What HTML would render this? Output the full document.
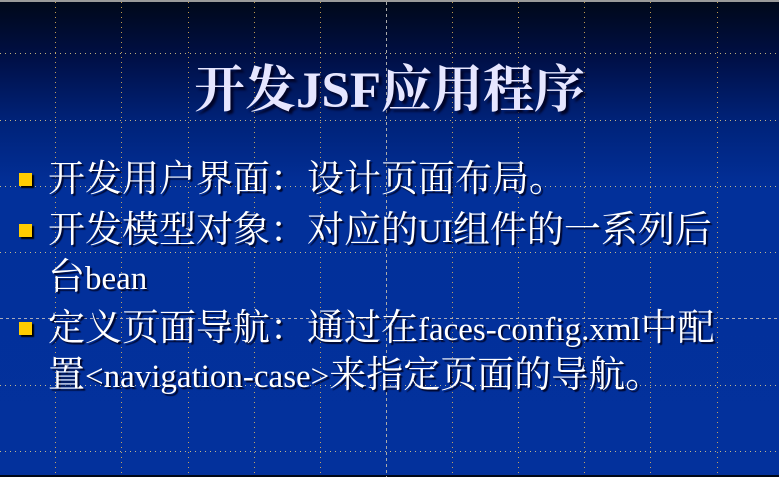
<!DOCTYPE html>
<html><head><meta charset="utf-8"><style>
body{margin:0;width:779px;height:475px;overflow:hidden;position:relative;
background:linear-gradient(#000818 0px,#001048 60px,#002278 120px,#02309a 190px,#03319c 475px);
border-top:2px solid #9a9a9a;box-sizing:border-box;font-family:"Liberation Serif","Noto Serif CJK SC",serif;}
.v{position:absolute;top:0;height:475px;width:1px;background:repeating-linear-gradient(180deg,rgba(240,190,90,.8) 0 1px,transparent 1px 5px);}
.h{position:absolute;left:0;width:779px;height:1px;background:repeating-linear-gradient(90deg,rgba(240,215,140,.8) 0 1px,transparent 1px 5px);}
.t{position:absolute;left:0;width:779px;top:46px;text-align:center;font-size:51px;font-weight:bold;color:#e6e6ff;text-shadow:3px 3px 2px #000428;}
.b{position:absolute;left:48px;font-size:37px;color:#fff;text-shadow:2px 2px 1px #000830;line-height:45px;white-space:nowrap}
.b span{font-size:33px}
.sq{position:absolute;left:19px;width:13px;height:13px;background:#ffcc00;box-shadow:2px 2px 1px #000;}
</style></head><body>
<div class="v" style="left:55px"></div><div class="v" style="left:121px"></div><div class="v" style="left:188px"></div><div class="v" style="left:254px"></div><div class="v" style="left:320px"></div><div class="v" style="left:386px;background:repeating-linear-gradient(180deg,#aaa 0 3px,transparent 3px 6px)"></div><div class="v" style="left:452px"></div><div class="v" style="left:518px"></div><div class="v" style="left:584px"></div><div class="v" style="left:650px"></div><div class="v" style="left:717px"></div>
<div class="h" style="top:51px"></div><div class="h" style="top:118px"></div><div class="h" style="top:184px"></div><div class="h" style="top:250px"></div><div class="h" style="top:316px;background:repeating-linear-gradient(90deg,#aab 0 3px,transparent 3px 6px)"></div><div class="h" style="top:383px"></div><div class="h" style="top:449px"></div>
<div class="t">开发JSF应用程序</div>
<div class="sq" style="top:171px"></div>
<div class="b" style="top:155px">开发用户界面：设计页面布局。</div>
<div class="sq" style="top:222px"></div>
<div class="b" style="top:206px">开发模型对象：对应的<span>UI</span>组件的一系列后<br>台<span>bean</span></div>
<div class="sq" style="top:320px"></div>
<div class="b" style="top:304px">定义页面导航：通过在<span>faces-config.xml</span>中配<br>置<span>&lt;navigation-case&gt;</span>来指定页面的导航。</div>
</body></html>
